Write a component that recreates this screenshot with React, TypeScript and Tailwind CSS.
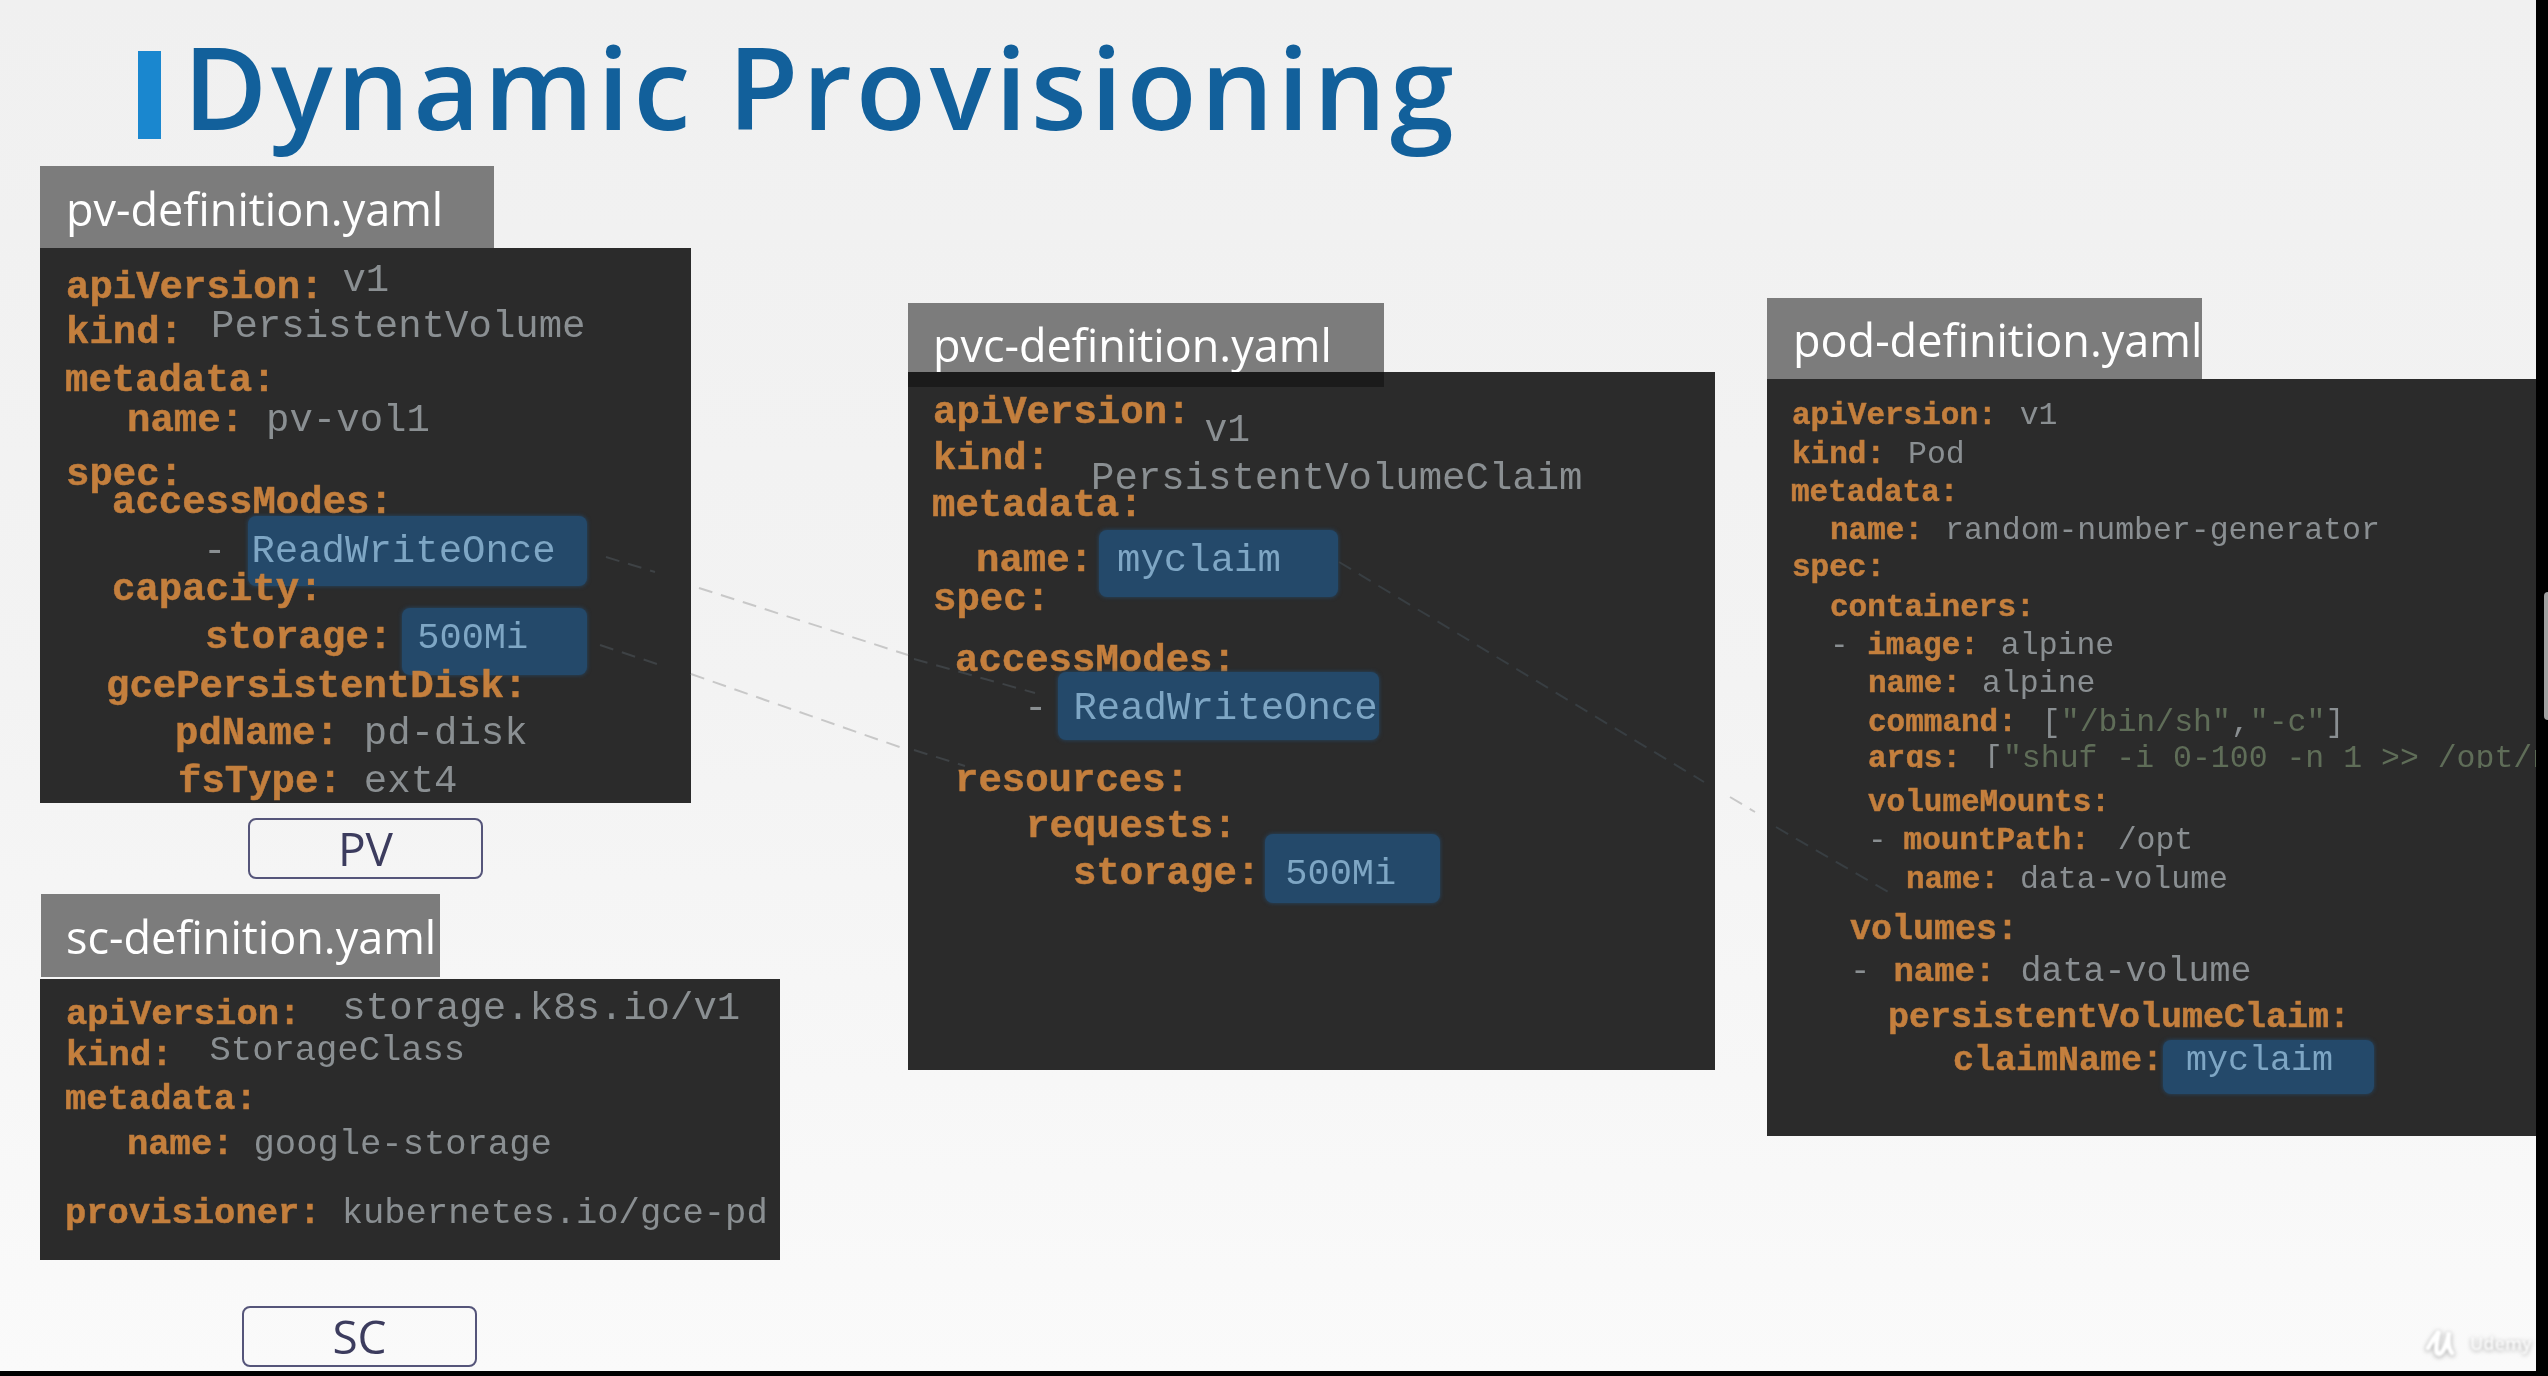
import type { ReactNode } from "react";

function Row({ className, children }: { className: string; children: ReactNode }) {
  return <div className={`flex items-baseline whitespace-pre ${className}`}>{children}</div>;
}

function K({ className = "", children }: { className?: string; children: ReactNode }) {
  return <span className={`font-bold text-[#c47f3d] [-webkit-text-stroke:0.5px_#c47f3d] ${className}`}>{children}</span>;
}

function V({ className = "", children }: { className?: string; children: ReactNode }) {
  return <span className={`text-[#8a8f92] ${className}`}>{children}</span>;
}

function Chip({ className, children }: { className: string; children: ReactNode }) {
  return <span className={`rounded-lg bg-[#24496a] text-[#7ea6c4] shadow-[0_0_4px_#24496a] ${className}`}>{children}</span>;
}

function Tab({ className, children }: { className: string; children: ReactNode }) {
  return (
    <div className={`overflow-hidden whitespace-pre bg-[#7c7c7c] font-['Open_Sans',sans-serif] text-[45px] leading-[45px] text-white ${className}`}>
      {children}
    </div>
  );
}

function Tag({ className, children }: { className: string; children: ReactNode }) {
  return (
    <div className={`flex h-[61px] w-[235px] items-center justify-center rounded-lg border-2 border-[#55557a] font-['Open_Sans',sans-serif] text-[46px] text-[#3c3c5e] ${className}`}>
      {children}
    </div>
  );
}

const mono = "bg-[#2b2b2b] font-['Liberation_Mono',monospace] text-[39px] leading-[38px]";

function PvPanel() {
  return (
    <div className={`h-[555px] w-[651px] pt-[21px] ${mono}`}>
      <Row className="h-[45px] pl-[26px]"><K>apiVersion:</K><V className="ml-[19px] -translate-y-[7px]">v1</V></Row>
      <Row className="h-[48px] pl-[26px]"><K>kind:</K><V className="ml-[28px] -translate-y-[6px]">PersistentVolume</V></Row>
      <Row className="h-[40px] pl-[25px]"><K>metadata:</K></Row>
      <Row className="h-[54px] pl-[87px]"><K>name:</K><V className="ml-[22px]">pv-vol1</V></Row>
      <Row className="h-[28px] pl-[26px]"><K>spec:</K></Row>
      <Row className="h-[49px] pl-[72px]"><K>accessModes:</K></Row>
      <Row className="h-[38px] pl-[163px]">
        <V>-</V>
        <Chip className="-mt-[18px] ml-[22px] w-[339px] pb-[14px] pl-[3px] pt-[17px] leading-[39px]">ReadWriteOnce</Chip>
      </Row>
      <Row className="h-[48px] pl-[72px]"><K>capacity:</K></Row>
      <Row className="h-[49px] pl-[165px]">
        <K>storage:</K>
        <Chip className="-mt-[11px] ml-[10px] w-[185px] pb-[18px] pl-[15px] pt-[12px] text-[37px] leading-[37px]">500Mi</Chip>
      </Row>
      <Row className="h-[47px] pl-[66px]"><K>gcePersistentDisk:</K></Row>
      <Row className="h-[48px] pl-[135px]"><K>pdName:</K><V className="ml-[25px]">pd-disk</V></Row>
      <Row className="pl-[138px]"><K>fsType:</K><V className="ml-[22px]">ext4</V></Row>
    </div>
  );
}

function ScPanel() {
  return (
    <div className={`h-[281px] w-[740px] pt-[16px] ${mono}`}>
      <Row className="h-[42px] pl-[26px]"><K className="text-[35.5px]">apiVersion:</K><V className="ml-[42px] -translate-y-[5px]">storage.k8s.io/v1</V></Row>
      <Row className="h-[44px] pl-[26px]"><K className="text-[35.5px]">kind:</K><V className="ml-[37px] -translate-y-[5px] text-[35.5px]">StorageClass</V></Row>
      <Row className="h-[45px] pl-[25px]"><K className="text-[35.5px]">metadata:</K></Row>
      <Row className="h-[69px] pl-[87px]"><K className="text-[35.5px]">name:</K><V className="ml-[20px] text-[35.5px]">google-storage</V></Row>
      <Row className="pl-[25px]"><K className="text-[35.5px]">provisioner:</K><V className="ml-[21px] text-[35.5px]">kubernetes.io/gce-pd</V></Row>
    </div>
  );
}

function PvcPanel() {
  return (
    <div className={`h-[698px] w-[807px] ${mono}`}>
      <div className="h-[15px] w-[476px] bg-[#1b1b1b]" />
      <div className="pt-[7px]">
        <Row className="h-[46px] pl-[25px]"><K>apiVersion:</K><V className="ml-[14px] translate-y-[18px] text-[38px]">v1</V></Row>
        <Row className="h-[47px] pl-[25px]"><K>kind:</K><V className="ml-[41px] translate-y-[20px]">PersistentVolumeClaim</V></Row>
        <Row className="h-[55px] pl-[24px]"><K>metadata:</K></Row>
        <Row className="h-[39px] pl-[68px]">
          <K>name:</K>
          <Chip className="-mt-[13px] ml-[6px] w-[239px] pb-[16px] pl-[18px] pt-[12px] leading-[39px]">myclaim</Chip>
        </Row>
        <Row className="h-[61px] pl-[25px]"><K>spec:</K></Row>
        <Row className="h-[48px] pl-[47px]"><K>accessModes:</K></Row>
        <Row className="h-[72px] pl-[116px]">
          <V>-</V>
          <Chip className="-mt-[19px] ml-[11px] w-[321px] pb-[11px] pl-[15px] pt-[18px] leading-[39px]">ReadWriteOnce</Chip>
        </Row>
        <Row className="h-[46px] pl-[47px]"><K>resources:</K></Row>
        <Row className="h-[47px] pl-[118px]"><K>requests:</K></Row>
        <Row className="pl-[165px]">
          <K>storage:</K>
          <Chip className="-mt-[21px] ml-[5px] w-[175px] pb-[10px] pl-[20px] pt-[22px] text-[37px] leading-[37px]">500Mi</Chip>
        </Row>
      </div>
    </div>
  );
}

function PodPanel() {
  return (
    <div className="h-[757px] w-[769px] overflow-hidden bg-[#2b2b2b] pt-[18px] font-['Liberation_Mono',monospace] text-[31px] leading-[38px]">
      <Row className="h-[39px] pl-[25px]"><K>apiVersion:</K><V className="ml-[23px] text-[31.5px]">v1</V></Row>
      <Row className="h-[38px] pl-[25px]"><K>kind:</K><V className="ml-[23px] text-[31.5px]">Pod</V></Row>
      <Row className="h-[38px] pl-[24px]"><K>metadata:</K></Row>
      <Row className="h-[37px] pl-[63px]"><K>name:</K><V className="ml-[22px] text-[31.5px]">random-number-generator</V></Row>
      <Row className="h-[40px] pl-[25px]"><K>spec:</K></Row>
      <Row className="h-[38px] pl-[63px]"><K>containers:</K></Row>
      <Row className="h-[38px] pl-[63px]"><V>- </V><K>image:</K><V className="ml-[22px] text-[31.5px]">alpine</V></Row>
      <Row className="h-[39px] pl-[101px]"><K>name:</K><V className="ml-[21px] text-[31.5px]">alpine</V></Row>
      <Row className="h-[36px] pl-[101px]">
        <K>command:</K>
        <V className="ml-[25px] text-[31.5px]">[<span className="text-[#5f6d58]">"/bin/sh"</span>,<span className="text-[#5f6d58]">"-c"</span>]</V>
      </Row>
      <Row className="mb-[16px] h-[28px] overflow-hidden pl-[101px]">
        <K>args:</K>
        <V className="ml-[23px] text-[31.5px]">[<span className="text-[#5f6d58]">"shuf -i 0-100 -n 1 &gt;&gt; /opt/number.out;"</span>]</V>
      </Row>
      <Row className="h-[38px] pl-[101px]"><K>volumeMounts:</K></Row>
      <Row className="h-[39px] pl-[101px]"><V>-</V><K className="ml-[17px]">mountPath:</K><V className="ml-[28px] text-[31.5px]">/opt</V></Row>
      <Row className="h-[50px] pl-[139px]"><K>name:</K><V className="ml-[21px] text-[31.5px]">data-volume</V></Row>
      <Row className="h-[42px] pl-[83px]"><K className="text-[35px]">volumes:</K></Row>
      <Row className="h-[46px] pl-[83px]"><V className="text-[34px]">-</V><K className="ml-[23px] text-[34px]">name:</K><V className="ml-[25px] text-[35px]">data-volume</V></Row>
      <Row className="h-[43px] pl-[121px]"><K className="text-[35px]">persistentVolumeClaim:</K></Row>
      <Row className="pl-[186px]">
        <K className="text-[35px]">claimName:</K>
        <Chip className="-mt-[3px] w-[211px] pb-[15px] pl-[23px] pt-[4px] text-[35px] leading-[35px]">myclaim</Chip>
      </Row>
    </div>
  );
}

// faint dashed connectors between the highlighted values
function Connectors() {
  return (
    <svg className="pointer-events-none absolute left-0 top-0" width="2536" height="1371" fill="none" strokeDasharray="14 9" strokeWidth="2">
      <path d="M699 588 L908 655" stroke="#c8c8c8" />
      <path d="M691 674 L908 750" stroke="#c8c8c8" />
      <path d="M606 557 L655 572" stroke="#3e4245" />
      <path d="M600 645 L660 665" stroke="#3e4245" />
      <path d="M914 659 L1035 693" stroke="#3e4245" />
      <path d="M914 750 L965 766" stroke="#3e4245" />
      <path d="M1339 562 L1704 782" stroke="#383e42" />
      <path d="M1730 797 L1755 812" stroke="#c8c8c8" />
      <path d="M1776 827 L1890 893" stroke="#383e42" />
    </svg>
  );
}

export default function App() {
  return (
    <div className="relative h-[1376px] w-[2548px] overflow-hidden bg-black">
      <div className="relative h-[1371px] w-[2536px] bg-gradient-to-b from-[#f0f0f0] via-[#f3f3f3] to-[#fafafa] blur-[0.7px]">
        <div className="flex h-[166px] items-start pl-[138px]">
          <div className="mt-[51px] h-[88px] w-[23px] bg-[#1a87cf]" />
          <h1 className="ml-[22px] mt-[28px] whitespace-pre font-['Open_Sans',sans-serif] text-[115px] font-semibold leading-[115px] tracking-[3.8px] text-[#12609b]">Dynamic Provisioning</h1>
        </div>

        <div className="flex pl-[40px]">
          <div className="w-[868px]">
            <Tab className="h-[82px] w-[454px] pl-[26px] pt-[20px]">pv-definition.yaml</Tab>
            <PvPanel />
            <Tag className="ml-[208px] mt-[15px]">PV</Tag>
            <Tab className="mb-[2px] ml-[1px] mt-[15px] h-[83px] w-[399px] pl-[25px] pt-[20px]">sc-definition.yaml</Tab>
            <ScPanel />
            <Tag className="ml-[202px] mt-[46px]">SC</Tag>
          </div>
          <div className="mt-[137px] w-[859px]">
            <Tab className="h-[69px] w-[476px] pl-[25px] pt-[19px]">pvc-definition.yaml</Tab>
            <PvcPanel />
          </div>
          <div className="mt-[132px] w-[769px]">
            <Tab className="h-[81px] w-[435px] pl-[26px] pt-[19px]">pod-definition.yaml</Tab>
            <PodPanel />
          </div>
        </div>

        <Connectors />
      </div>

      <div className="absolute bottom-[18px] left-[2425px] flex items-center gap-[7px] blur-[0.8px] drop-shadow-[0_1px_2px_rgba(0,0,0,0.35)]">
        <svg width="38" height="30" viewBox="0 0 38 30" fill="none" stroke="#ffffff" strokeWidth="5" strokeLinecap="round">
          <path d="M3 20 C6 14 10 8 14 3 C12 12 10 20 12 25 C16 29 21 20 24 4 C23 12 23 20 27 25" />
        </svg>
        <span className="font-['Open_Sans',sans-serif] text-[18px] font-semibold text-white">Udemy</span>
      </div>
      <div className="absolute left-[2544px] top-[592px] h-[128px] w-[4px] rounded-l bg-[#a0a0a0]" />
    </div>
  );
}
